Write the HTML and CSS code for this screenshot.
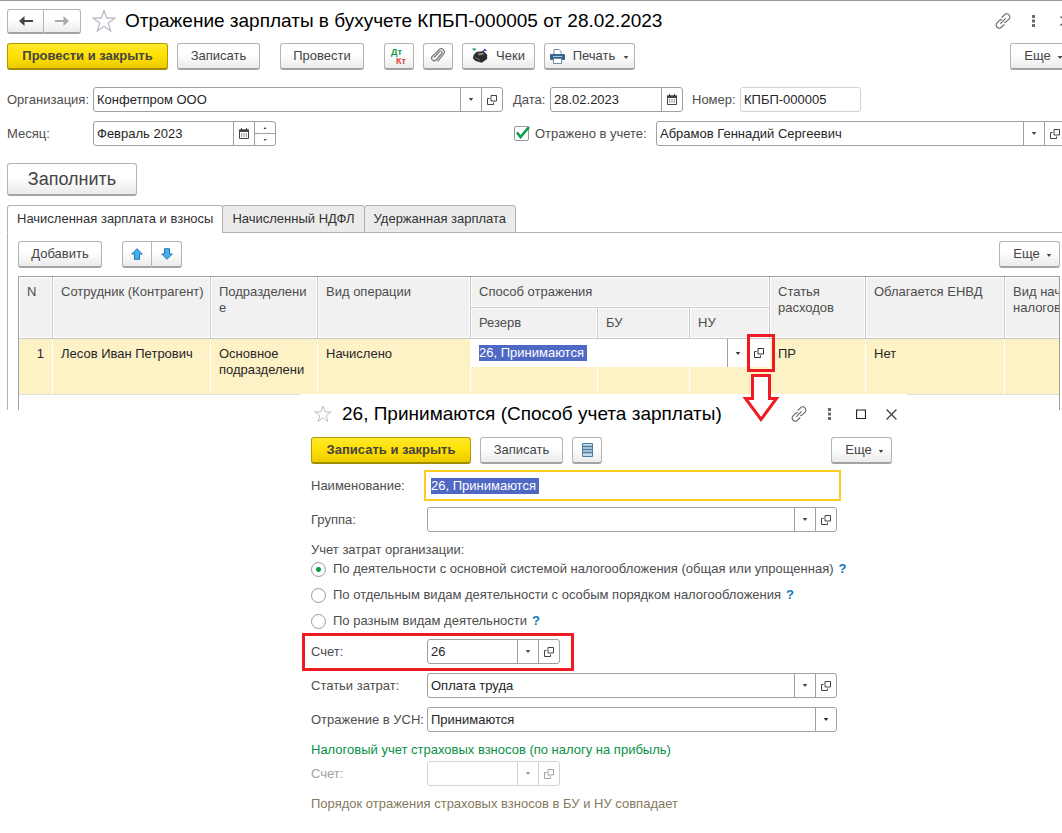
FILE: index.html
```html
<!DOCTYPE html>
<html lang="ru">
<head>
<meta charset="utf-8">
<title>Отражение зарплаты в бухучете</title>
<link rel="stylesheet" href="styles.css">
</head>
<body>
<svg class="defs" aria-hidden="true">
  <symbol id="i-caret" viewBox="0 0 7 4"><path d="M0.5 0h6L3.5 4z" fill="currentColor"/></symbol>
  <symbol id="i-open" viewBox="0 0 10 10"><g fill="none" stroke="currentColor"><path d="M4 .5h5.500v5.500h-5.500z"/><path d="M2.500 3.500h-2v6h6v-2"/></g></symbol>
  <symbol id="i-cal" viewBox="0 0 10 11"><path d="M.5 2h9v8.500h-9z" fill="none" stroke="currentColor"/><path d="M0 1.500h10v2.500h-10zM2 0h1v2h-1zM7 0h1v2h-1z" fill="currentColor"/><path d="M2 6h6M2 8h6" stroke="currentColor" stroke-dasharray="1.200 1.200"/></symbol>
  <symbol id="i-link" viewBox="0 0 17 17"><g fill="none" stroke="currentColor" stroke-width="1.200" stroke-linecap="round"><path d="M7.500 4.500l2.500-2.600a3.200 3.200 0 0 1 4.800 0a3.200 3.200 0 0 1 0 4.600l-2.600 2.600a3 3 0 0 1-2 .8"/><path d="M9.500 12.500l-2.500 2.600a3.200 3.200 0 0 1-4.800 0a3.200 3.200 0 0 1 0-4.600l2.600-2.600a3 3 0 0 1 2-.8"/><path d="M6 11l5-5"/></g></symbol>
  <symbol id="i-dots" viewBox="0 0 3 12"><path d="M0 0h3v3H0zM0 4.500h3v3H0zM0 9h3v3H0z" fill="#6b6b6b"/></symbol>
  <symbol id="i-close" viewBox="0 0 10 10"><path d="M.5 .5l9 9M9.500 .5l-9 9" stroke="#444" stroke-width="1.200"/></symbol>
  <symbol id="i-star" viewBox="0 0 24 24"><path d="M12 1.500l2.700 7.700h8.100l-6.500 4.900 2.400 7.900-6.700-4.800-6.700 4.800 2.400-7.900L1.200 9.200h8.100z" fill="none" stroke="#b3b9c0" stroke-width="1.200"/></symbol>
</svg>

<main class="window">
  <div class="wide">
    <header class="titlebar">
      <div class="btn-group nav">
        <button class="btn" aria-label="Назад"><svg width="14" height="10" viewBox="0 0 14 10"><path d="M0 5l5.500-5v4H14v2H5.500v4z" fill="#444"/></svg></button>
        <button class="btn" aria-label="Вперед"><svg width="14" height="10" viewBox="0 0 14 10"><path d="M14 5L8.500 0v4H0v2h8.500v4z" fill="#aaa"/></svg></button>
      </div>
      <button class="plain star" aria-label="В избранное"><svg width="24" height="24"><use href="#i-star"/></svg></button>
      <h1>Отражение зарплаты в бухучете КПБП-000005 от 28.02.2023</h1>
      <div class="win-icons">
        <button class="plain" aria-label="Ссылка"><svg width="16" height="16"><use href="#i-link"/></svg></button>
        <button class="plain" aria-label="Меню"><svg width="3" height="12"><use href="#i-dots"/></svg></button>
        <button class="plain" aria-label="Закрыть"><svg width="10" height="10"><use href="#i-close"/></svg></button>
      </div>
    </header>

    <div class="toolbar">
      <button class="btn primary w161">Провести и закрыть</button>
      <button class="btn w83">Записать</button>
      <button class="btn w84 apart">Провести</button>
      <button class="btn w30 apart" aria-label="Дт Кт"><svg width="18" height="18" viewBox="0 0 18 18"><text x="1" y="8" class="dt">Дт</text><text x="6" y="17" class="kt">Кт</text></svg></button>
      <button class="btn w30" aria-label="Файлы"><svg width="14" height="16" viewBox="0 0 14 16"><path d="M3 9.500l5.500-6a1.500 1.500 0 0 1 2.300 2L5 12a2.600 2.600 0 0 1-3.900-3.400L8 1.700a3.200 3.200 0 0 1 4.700 4.300L6.500 13.300" fill="none" stroke="#777" stroke-width="1.200"/></svg></button>
      <button class="btn w73"><svg width="16" height="16" viewBox="0 0 18 17"><path d="M0 0h5L2.500 3z" fill="#0a9a48"/><path d="M12 3h5L14.500 0z" fill="#3445c4"/><path d="M5 4l8-1 4 4v5l-6 4-7-2-3-3 1-4z" fill="#2c2c2c"/><path d="M6 6l6-1.500 2 2-6 1.500z" fill="#888"/><path d="M3 10l5 2v2" stroke="#777" fill="none"/></svg>Чеки</button>
      <button class="btn w91"><svg width="15" height="15" viewBox="0 0 15 15"><path d="M4 6V.5h5L11 2.500V6z" fill="#fff" stroke="#6f8ba3"/><rect x="0" y="5" width="15" height="6" rx="1" fill="#35648e"/><path d="M3 7.500h9" stroke="#a9c4dc"/><path d="M3.500 9.500h8v5h-8z" fill="#fff" stroke="#6f8ba3"/></svg>Печать<svg class="low" width="6" height="3"><use href="#i-caret"/></svg></button>
      <button class="btn more push">Еще<svg class="low" width="6" height="3"><use href="#i-caret"/></svg></button>
    </div>

    <form class="form">
      <div class="row">
        <label class="lbl" for="org">Организация:</label>
        <div class="field grow"><input id="org" value="Конфетпром ООО"><button type="button" aria-label="Выбрать"><svg width="6" height="3"><use href="#i-caret"/></svg></button><button type="button" aria-label="Открыть"><svg width="10" height="10"><use href="#i-open"/></svg></button></div>
      </div>
      <div class="row">
        <label class="lbl-date" for="date">Дата:</label>
        <div class="field w133"><input id="date" value="28.02.2023"><button type="button" aria-label="Календарь"><svg width="10" height="11"><use href="#i-cal"/></svg></button></div>
        <label class="lbl-num" for="num">Номер:</label>
        <div class="field faint w121"><input id="num" value="КПБП-000005"></div>
      </div>
      <div class="row">
        <label class="lbl" for="month">Месяц:</label>
        <div class="field w183"><input id="month" value="Февраль 2023"><button type="button" aria-label="Календарь"><svg width="10" height="11"><use href="#i-cal"/></svg></button><span class="spin"><button type="button" aria-label="Больше"><svg class="flip" width="4" height="2"><use href="#i-caret"/></svg></button><button type="button" aria-label="Меньше"><svg width="4" height="2"><use href="#i-caret"/></svg></button></span></div>
      </div>
      <div class="row">
        <label class="check"><span class="tick"><input type="checkbox" checked><svg width="14" height="13" viewBox="0 0 14 13"><path d="M1 6.500l3.500 4.500L13 1" fill="none" stroke="#0a9a48" stroke-width="2.600"/></svg></span>Отражено в учете:</label>
        <div class="field grow"><input aria-label="Ответственный" value="Абрамов Геннадий Сергеевич"><button type="button" aria-label="Выбрать"><svg width="6" height="3"><use href="#i-caret"/></svg></button><button type="button" aria-label="Открыть"><svg width="10" height="10"><use href="#i-open"/></svg></button></div>
      </div>
    </form>
  </div>

  <button class="btn fill">Заполнить</button>

  <div class="tabs" role="tablist">
    <button class="tab active" role="tab" aria-selected="true">Начисленная зарплата и взносы</button>
    <button class="tab" role="tab">Начисленный НДФЛ</button>
    <button class="tab" role="tab">Удержанная зарплата</button>
  </div>

  <section class="panel">
    <div class="panel-bar">
      <button class="btn w84">Добавить</button>
      <div class="btn-group move">
        <button class="btn" aria-label="Вверх"><svg width="12" height="12" viewBox="0 0 12 12"><path d="M6 .7l5.300 5.300H8.500v5.300h-5V6H.7z" fill="#43b0f0" stroke="#2777ab"/></svg></button>
        <button class="btn" aria-label="Вниз"><svg width="12" height="12" viewBox="0 0 12 12"><path d="M6 11.300l5.300-5.300H8.500V.7h-5V6H.7z" fill="#43b0f0" stroke="#2777ab"/></svg></button>
      </div>
      <button class="btn more push">Еще<svg class="low" width="6" height="3"><use href="#i-caret"/></svg></button>
    </div>
    <div class="grid">
      <table>
        <colgroup><col class="c-n"><col class="c-emp"><col class="c-dep"><col class="c-op"><col class="c-res"><col class="c-bu"><col class="c-nu"><col class="c-exp"><col class="c-envd"><col class="c-tax"></colgroup>
        <thead>
          <tr><th rowspan="2">N</th><th rowspan="2">Сотрудник (Контрагент)</th><th rowspan="2">Подразделени<br>е</th><th rowspan="2">Вид операции</th><th colspan="3">Способ отражения</th><th rowspan="2">Статья<br>расходов</th><th rowspan="2">Облагается ЕНВД</th><th rowspan="2">Вид нач<br>налогов</th></tr>
          <tr><th>Резерв</th><th>БУ</th><th>НУ</th></tr>
        </thead>
        <tbody>
          <tr><td rowspan="2" class="num">1</td><td rowspan="2">Лесов Иван Петрович</td><td rowspan="2">Основное<br>подразделени</td><td rowspan="2">Начислено</td><td colspan="3" class="edit"><div class="editor"><input class="selected" aria-label="Способ отражения" value="26, Принимаются"><button class="drop" aria-label="Выбрать"><svg width="6" height="3"><use href="#i-caret"/></svg></button><button aria-label="Открыть"><svg width="10" height="10"><use href="#i-open"/></svg></button></div></td><td rowspan="2">ПР</td><td rowspan="2">Нет</td><td rowspan="2"></td></tr>
          <tr><td></td><td></td><td></td></tr>
        </tbody>
      </table>
    </div>
  </section>
</main>

<section class="dialog" role="dialog" aria-label="Способ учета зарплаты">
  <header class="dlg-title">
    <button class="plain" aria-label="В избранное"><svg width="18" height="18"><use href="#i-star"/></svg></button>
    <h2>26, Принимаются (Способ учета зарплаты)</h2>
    <div class="win-icons">
      <button class="plain" aria-label="Ссылка"><svg width="16" height="16"><use href="#i-link"/></svg></button>
      <button class="plain" aria-label="Меню"><svg width="3" height="12"><use href="#i-dots"/></svg></button>
      <button class="plain" aria-label="Развернуть"><svg width="10" height="10" viewBox="0 0 10 10"><path d="M.5 1h9v8.500h-9z" fill="none" stroke="#222" stroke-width="1.200"/></svg></button>
      <button class="plain" aria-label="Закрыть"><svg width="11" height="11"><use href="#i-close"/></svg></button>
    </div>
  </header>
  <div class="toolbar dlg-bar">
    <button class="btn primary w160">Записать и закрыть</button>
    <button class="btn w83">Записать</button>
    <button class="btn w30" aria-label="Список"><svg width="11" height="14" viewBox="0 0 11 14"><path d="M.5 .5h10v13H.5z" fill="#c3d9e8" stroke="#4b7da0"/><path d="M1 3.500h9M1 6.500h9M1 9.500h9" stroke="#4b7da0" stroke-width="1.400"/></svg></button>
    <button class="btn more push">Еще<svg class="low" width="6" height="3"><use href="#i-caret"/></svg></button>
  </div>
  <form class="dlg-form">
    <div class="row">
      <label class="lbl" for="name">Наименование:</label>
      <div class="field focused"><input class="selected" id="name" value="26, Принимаются"></div>
    </div>
    <div class="row">
      <label class="lbl" for="group">Группа:</label>
      <div class="field grow"><input id="group"><button type="button" aria-label="Выбрать"><svg width="6" height="3"><use href="#i-caret"/></svg></button><button type="button" aria-label="Открыть"><svg width="10" height="10"><use href="#i-open"/></svg></button></div>
    </div>
    <fieldset>
      <legend>Учет затрат организации:</legend>
      <div class="option"><label><input type="radio" name="sys" checked>По деятельности с основной системой налогообложения (общая или упрощенная)</label><button type="button" class="plain help">?</button></div>
      <div class="option"><label><input type="radio" name="sys">По отдельным видам деятельности с особым порядком налогообложения</label><button type="button" class="plain help">?</button></div>
      <div class="option"><label><input type="radio" name="sys">По разным видам деятельности</label><button type="button" class="plain help">?</button></div>
    </fieldset>
    <div class="row">
      <label class="lbl" for="acc">Счет:</label>
      <div class="field w133"><input id="acc" value="26"><button type="button" aria-label="Выбрать"><svg width="6" height="3"><use href="#i-caret"/></svg></button><button type="button" aria-label="Открыть"><svg width="10" height="10"><use href="#i-open"/></svg></button></div>
      <span class="mark mark-row"></span>
    </div>
    <div class="row">
      <label class="lbl" for="items">Статьи затрат:</label>
      <div class="field grow"><input id="items" value="Оплата труда"><button type="button" aria-label="Выбрать"><svg width="6" height="3"><use href="#i-caret"/></svg></button><button type="button" aria-label="Открыть"><svg width="10" height="10"><use href="#i-open"/></svg></button></div>
    </div>
    <div class="row">
      <label class="lbl" for="usn">Отражение в УСН:</label>
      <div class="field grow choice"><select id="usn"><option>Принимаются</option></select><svg width="6" height="3"><use href="#i-caret"/></svg></div>
    </div>
    <p class="tax-title">Налоговый учет страховых взносов (по налогу на прибыль)</p>
    <div class="row off">
      <label class="lbl" for="acc2">Счет:</label>
      <div class="field faint w133"><input id="acc2" disabled><button type="button" disabled aria-label="Выбрать"><svg width="6" height="3"><use href="#i-caret"/></svg></button><button type="button" disabled aria-label="Открыть"><svg width="10" height="10"><use href="#i-open"/></svg></button></div>
    </div>
    <p class="note">Порядок отражения страховых взносов в БУ и НУ совпадает</p>
  </form>
</section>

<span class="mark mark-open"></span>
<svg class="arrow" width="38" height="50" viewBox="0 0 38 50"><path d="M10.500 2.500h17v23h7L19 46.500 3.500 25.500h7z" fill="#fff" stroke="#ed1c24" stroke-width="3"/></svg>
</body>
</html>
```

FILE: styles.css
```css
* { box-sizing: border-box; }
body {
  margin: 0;
  position: relative;
  min-height: 100vh;
  overflow: hidden;
  background: #fff;
  color: #4d4d4d;
  font: 13px/16px "Liberation Sans", Arial, sans-serif;
}
button, input, select { font: inherit; color: inherit; margin: 0; }
svg { display: block; flex: none; }
h1, h2, p { margin: 0; font-weight: normal; }
.defs { position: absolute; width: 0; height: 0; }

.window { border-top: 1px solid #999; overflow: hidden; }
.wide { margin-right: -18px; padding-left: 7px; }
.titlebar { display: flex; align-items: center; height: 40px; }
h1, h2 { color: #000; font-size: 19px; line-height: 24px; white-space: nowrap; }
.plain { display: flex; align-items: center; justify-content: center; padding: 0; border: 0; background: none; color: #666; }
.star { margin: 0 9px 0 11px; }
.win-icons { display: flex; margin-left: auto; }
.win-icons .plain { width: 31px; height: 24px; }

.btn {
  display: flex;
  align-items: center;
  justify-content: center;
  gap: 8px;
  height: 27px;
  padding: 0;
  border: 1px solid #b4b4b4;
  border-bottom: 2px solid #a3a3a3;
  border-radius: 3px;
  background: linear-gradient(#fff 40%, #ebebeb);
  color: #444;
  flex: none;
  white-space: nowrap;
}
.primary {
  border-color: #b09a00;
  border-bottom-color: #a08c00;
  background: linear-gradient(#ffe92e, #ffe000 50%, #eccb00);
  font-weight: bold;
}
.btn-group { display: flex; }
.btn-group .btn:first-child { border-radius: 3px 0 0 3px; }
.btn-group .btn:last-child { border-radius: 0 3px 3px 0; border-left: 0; }
.nav .btn { width: 37px; height: 25px; }
.move .btn { width: 30px; }
.toolbar { display: flex; gap: 9px; padding: 2px 9px 0 0; }
.apart { margin-left: 11px; }
.push { margin-left: auto; }
.more { width: 61px; padding-left: 6px; gap: 6px; }
.low { margin-top: 3px; }
.w30 { width: 30px; }
.w73 { width: 73px; }
.w83 { width: 83px; }
.w84 { width: 84px; }
.w91 { width: 91px; }
.w121 { width: 121px; }
.w133 { width: 133px; }
.w160 { width: 160px; }
.w161 { width: 161px; }
.w183 { width: 183px; }
.dt, .kt { font-size: 9px; font-weight: bold; }
.dt { fill: #0a9a48; }
.kt { fill: #e04040; }

.form {
  display: grid;
  grid-template-columns: 496px 1fr;
  gap: 9px 10px;
  padding: 17px 14px 0 0;
}
.row { display: flex; align-items: center; height: 25px; white-space: nowrap; }
.form .lbl { width: 86px; }
.lbl-date { width: 37px; }
.lbl-num { width: 57px; padding-left: 9px; }
.field {
  display: flex;
  height: 25px;
  border: 1px solid #a0a0a0;
  border-radius: 3px;
  background: #fff;
  color: #262626;
  overflow: hidden;
}
.grow { flex: 1; }
.field input, .field select { flex: 1; min-width: 0; padding: 0 3px; border: 0; outline: 0; background: none; }
.field button {
  display: flex;
  align-items: center;
  justify-content: center;
  width: 21px;
  flex: none;
  padding: 0;
  border: 0;
  border-left: 1px solid #a0a0a0;
  background: none;
  color: #444;
}
.faint { border-color: #d2d2d2; }
.spin { display: flex; flex-direction: column; }
.spin button { flex: 1; }
.spin button + button { border-top: 1px solid #a0a0a0; }
.flip { transform: rotate(180deg); }
.check { display: flex; align-items: center; width: 143px; padding-left: 1px; }
.tick { display: flex; position: relative; width: 21px; }
.tick input { appearance: none; width: 15px; height: 15px; margin: 0; border: 1px solid #999; border-radius: 2px; }
.tick svg { position: absolute; left: 2px; top: 0; }

.fill { width: 130px; height: 33px; margin: 17px 0 9px 7px; font-size: 18px; }

.tabs { display: flex; margin-left: 7px; border-bottom: 1px solid #b0b0b0; }
.tab {
  height: 28px;
  margin: 0 0 -1px -1px;
  padding: 0 9px;
  border: 1px solid #b0b0b0;
  border-radius: 3px 3px 0 0;
  background: #ebebeb;
  color: #333;
}
.tab.active { margin-left: 0; border-bottom-color: #fff; background: #fff; }
.panel { margin-left: 7px; padding: 8px 2px 0 10px; border-left: 1px solid #b0b0b0; }
.panel-bar { display: flex; gap: 20px; }
.grid { height: 134px; margin-top: 8px; border: 1px solid #a0a0a0; border-bottom: 0; overflow: hidden; }
table { width: 1120px; table-layout: fixed; border-collapse: separate; border-spacing: 0; }
.c-n { width: 34px; }
.c-emp { width: 158px; }
.c-dep { width: 107px; }
.c-op { width: 153px; }
.c-res { width: 127px; }
.c-bu { width: 92px; }
.c-nu { width: 80px; }
.c-exp { width: 96px; }
.c-envd { width: 139px; }
th, td { padding: 7px 8px 0; text-align: left; vertical-align: top; font-weight: normal; }
th {
  height: 31px;
  border-right: 1px solid #c8c8c8;
  border-bottom: 1px solid #c8c8c8;
  background: #f1f1f1;
  box-shadow: inset 0 0 0 1px #fff;
  white-space: nowrap;
}
td {
  height: 28px;
  border-right: 1px solid #fff;
  background: #fdf1c6;
  color: #262626;
}
td[rowspan] { border-bottom: 1px solid #dedede; }
td.num { text-align: right; }
td.edit { padding: 0; background: #fff; }
.editor { display: flex; align-items: center; height: 28px; padding-left: 8px; }
.selected { height: 16px; padding: 0; border: 0; outline: 0; background: #4f68c4; color: #fff; }
.editor .selected { width: 108px; }
.editor button { display: flex; align-items: center; justify-content: center; width: 21px; height: 28px; padding: 0; border: 0; background: none; color: #333; }
.editor .drop { margin-left: auto; border-left: 1px solid #a0a0a0; }

.dialog {
  position: absolute;
  left: 300px;
  top: 394px;
  width: 607px;
  padding-left: 11px;
  background: #fff;
}
.dlg-title { display: flex; align-items: center; height: 40px; }
.dlg-title > .plain { width: 24px; margin-right: 7px; }
.dlg-bar { padding: 3px 15px 6px 0; }
.dlg-form { display: flex; flex-direction: column; gap: 9px; padding: 3px 70px 0 0; }
.dlg-form .lbl { width: 116px; }
.dlg-form .row { position: relative; }
.focused { flex: 1; height: 31px; margin: 0 -4px 0 -3px; padding: 6px 5px; border: 2px solid #fbcb1e; border-radius: 0; }
.field.focused .selected { flex: none; width: 108px; height: 16px; padding: 0; background: #4f68c4; color: #fff; }
fieldset { margin: 0 -20px -4px 0; padding: 0; border: 0; }
legend { padding: 1px 0 0; height: 15px; }
.option { display: flex; align-items: center; gap: 5px; height: 26px; white-space: nowrap; }
.option label { display: flex; align-items: center; gap: 7px; }
.option input { appearance: none; width: 15px; height: 15px; border: 1px solid #999; border-radius: 50%; }
.option input:checked { background: radial-gradient(circle, #0a9a48 2px, #fff 3px); }
.help { color: #0f7ab8; font-weight: bold; }
.choice { align-items: center; }
.choice select { appearance: none; height: 23px; border-right: 1px solid #a0a0a0; }
.choice svg { margin: 0 7px; }
.tax-title { color: #0a9048; height: 17px; padding-top: 1px; }
.row.off { margin-top: -6px; color: #a0a0a0; }
.row.off button { border-color: #d2d2d2; color: #a0a0a0; }
.note { margin-top: 1px; color: #86795c; }

.mark { position: absolute; border: 3px solid #ed1c24; pointer-events: none; }
.mark-row { left: -9px; top: -6px; width: 272px; height: 38px; }
.mark-open { left: 747px; top: 334px; width: 28px; height: 38px; }
.arrow { position: absolute; left: 742px; top: 373px; }
```
